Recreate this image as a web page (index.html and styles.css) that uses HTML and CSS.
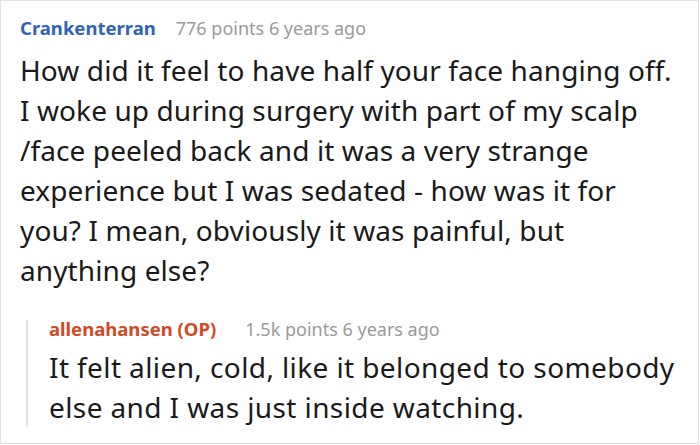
FILE: index.html
```html
<!DOCTYPE html>
<html>
<head>
<meta charset="utf-8">
<link rel="stylesheet" href="styles.css">
</head>
<body>
<div class="card">
  <div class="comment">
    <div class="meta"><span class="author">Crankenterran</span><span class="info">776 points 6 years ago</span></div>
    <p class="text">How did it feel to have half your face hanging off. I woke up during surgery with part of my scalp /face peeled back and it was a very strange experience but I was sedated - how was it for you? I mean, obviously it was painful, but anything else?</p>
  </div>
  <div class="reply">
    <div class="meta"><span class="author op">allenahansen (OP)</span><span class="info">1.5k points 6 years ago</span></div>
    <p class="text">It felt alien, cold, like it belonged to somebody else and I was just inside watching.</p>
  </div>
</div>
</body>
</html>
```
FILE: styles.css
```css
html, body {
  margin: 0;
  padding: 0;
  background: #fff;
}
.card {
  box-sizing: border-box;
  width: 699px;
  height: 444px;
  border: 1px solid #e2e2e2;
  padding: 15px 14px 0 19px;
  font-family: "Noto Sans", "Open Sans", sans-serif;
  color: #1a1a1a;
}
.meta {
  display: flex;
  align-items: baseline;
  gap: 20px;
  font-size: 18px;
  line-height: 24px;
}
.author {
  font-size: 18.5px;
  font-weight: 700;
  color: #3064b6;
}
.author.op {
  color: #d04a25;
}
.info {
  color: #9a9a9a;
}
.text {
  margin: 10px 0 0 0;
  font-size: 28px;
  letter-spacing: 0.1px;
  line-height: 40px;
}
.reply {
  margin: 30px 0 0 6px;
  border-left: 2px solid #e3e3e3;
  padding: 0 0 0 21px;
}
.reply .meta {
  gap: 29px;
  line-height: 18px;
}
.reply .text {
  margin: 9px 0 -8px 0;
  letter-spacing: 0.4px;
}
```
